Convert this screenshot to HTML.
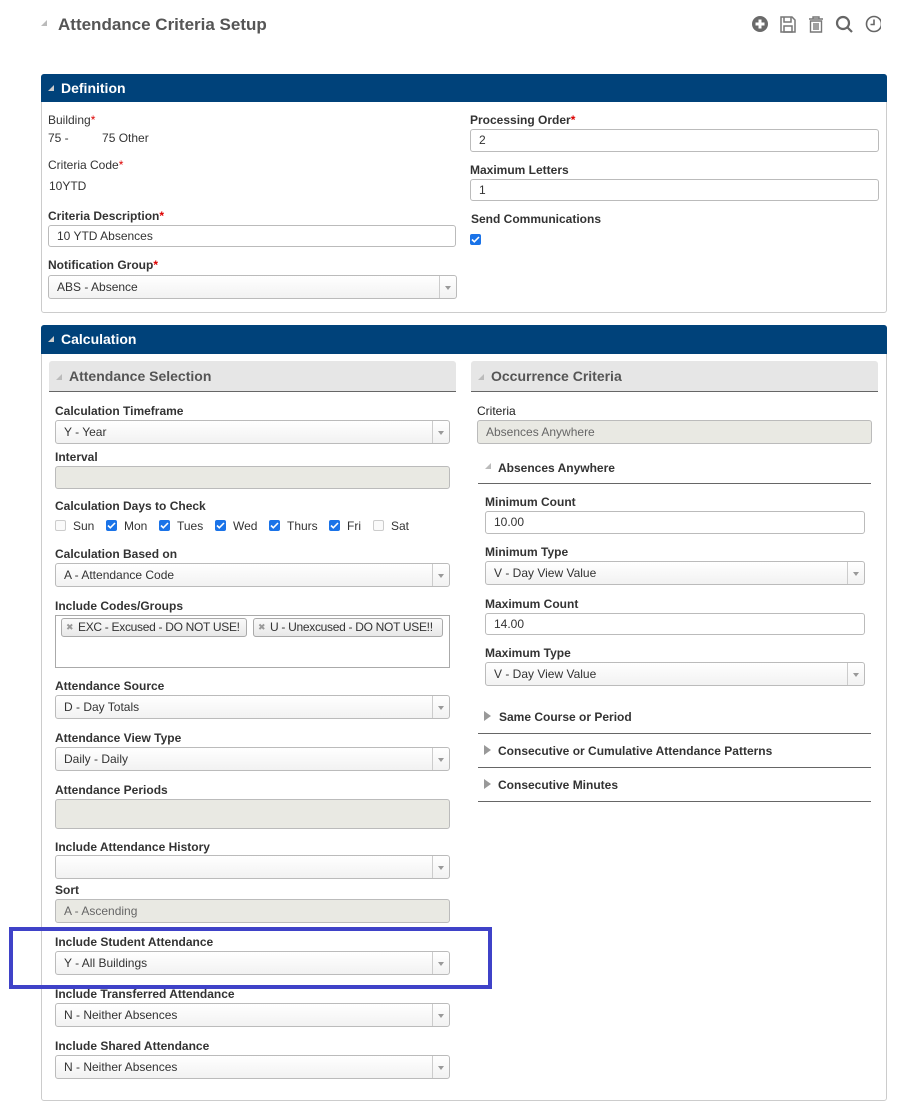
<!DOCTYPE html>
<html><head><meta charset="utf-8"><style>
*{box-sizing:border-box;margin:0;padding:0}
body{width:907px;height:1107px;background:#fff;font-family:"Liberation Sans",Arial,sans-serif;font-size:12px;color:#333;position:relative;overflow:hidden}
.a{position:absolute}
.lb{position:absolute;font-size:12px;font-weight:bold;color:#333;line-height:14px;white-space:nowrap}
.lb.n{font-weight:normal}
.req{color:#d00}
.in{position:absolute;height:23px;border:1px solid #bbb;border-radius:3px;background:#fff;padding:0 8px;line-height:21px;font-size:12px;color:#333;white-space:nowrap}
.in.dis{background:#e9e9e3;border-color:#bbb;color:#666}
.sel{position:absolute;height:24px;border:1px solid #bbb;border-radius:3px;background:linear-gradient(#fff,#f2f2f2);padding:0 8px;line-height:22px;font-size:12px;color:#333}
.sel:after{content:"";position:absolute;right:0;top:0;bottom:0;width:16px;border-left:1px solid #ccc}
.sel:before{content:"";position:absolute;right:5px;top:10px;border-left:3px solid transparent;border-right:3px solid transparent;border-top:4px solid #999}
.hdr{position:absolute;background:#00427a;color:#fff;font-weight:bold;font-size:14px;line-height:28px;padding-left:20px;border-radius:3px 3px 0 0}
.tri{position:absolute;width:0;height:0;border-left:6px solid transparent;border-bottom:6px solid #bbb}
.sub{position:absolute;background:#e6e6e6;border-bottom:1px solid #666;border-radius:3px 3px 0 0;height:31px;line-height:30px;padding-left:20px;font-weight:bold;font-size:14px;color:#555}
.cb{position:absolute;width:11px;height:11px;border-radius:2px;background:#1a73e8}
.cb svg{position:absolute;left:1px;top:1px}
.cbo{position:absolute;width:11px;height:11px;border-radius:2px;border:1px solid #ccc;background:#fafafa}
.day{position:absolute;font-size:12px;top:520px;line-height:13px}
.hr{position:absolute;height:1px;background:#666}
.rt{position:absolute;width:0;height:0;border-top:5px solid transparent;border-bottom:5px solid transparent;border-left:7px solid #999}
.chip{position:absolute;height:19px;border:1px solid #aaa;border-radius:3px;background:linear-gradient(#fafafa,#e8e8e8);line-height:17px;padding-left:16px;font-size:12px;color:#333;white-space:nowrap;overflow:hidden;letter-spacing:-0.3px}
</style></head><body>

<div class="tri" style="left:41px;top:20px"></div>
<div class="a" style="left:58px;top:15px;font-size:17px;font-weight:bold;color:#555">Attendance Criteria Setup</div>

<svg class="a" style="left:751px;top:15px" width="130" height="20" viewBox="0 0 130 20">
 <circle cx="9" cy="9" r="8" fill="#6a6a6a"/><rect x="4.5" y="7.5" width="9" height="3" fill="#fff"/><rect x="7.5" y="4.5" width="3" height="9" fill="#fff"/>
 <g fill="none" stroke="#777" stroke-width="1.5"><path d="M30 2h11l3 3v12H30z"/><path d="M33 2v5h7V2"/><rect x="33" y="11" width="8" height="6"/></g>
 <g fill="none" stroke="#777" stroke-width="1.4"><path d="M58 4h14M62 4V2h6v2"/><path d="M59.5 6h11v11h-11z"/><path d="M63 8v7M65 8v7M67 8v7"/></g>
 <g fill="none" stroke="#666" stroke-width="2.2"><circle cx="92" cy="8" r="6"/><path d="M96.5 12.5l4.5 4.5"/></g>
 <g fill="none" stroke="#666" stroke-width="1.6"><circle cx="123" cy="9" r="7.5"/><path d="M123 4.5v5h-3.5"/></g>
</svg>

<div class="a" style="left:41px;top:74px;width:846px;height:239px;border:1px solid #ccc;border-radius:3px"></div>
<div class="hdr" style="left:41px;top:74px;width:846px;height:28px">Definition</div>
<div class="tri" style="left:48px;top:85px;border-bottom-color:#ccc"></div>

<div class="lb n" style="left:48px;top:113px">Building<span class="req">*</span></div>
<div class="a" style="left:48px;top:131px">75 -&nbsp;&nbsp;&nbsp;&nbsp;&nbsp;&nbsp;&nbsp;&nbsp;&nbsp;&nbsp;75 Other</div>
<div class="lb n" style="left:48px;top:158px">Criteria Code<span class="req">*</span></div>
<div class="a" style="left:49px;top:179px">10YTD</div>
<div class="lb" style="left:48px;top:209px">Criteria Description<span class="req">*</span></div>
<div class="in" style="left:48px;top:225px;width:408px;height:22px;line-height:20px">10 YTD Absences</div>
<div class="lb" style="left:48px;top:258px">Notification Group<span class="req">*</span></div>
<div class="sel" style="left:48px;top:275px;width:409px">ABS - Absence</div>

<div class="lb" style="left:470px;top:113px">Processing Order<span class="req">*</span></div>
<div class="in" style="left:470px;top:129px;width:409px;height:23px">2</div>
<div class="lb" style="left:470px;top:163px">Maximum Letters</div>
<div class="in" style="left:470px;top:179px;width:409px;height:22px;line-height:20px">1</div>
<div class="lb" style="left:471px;top:212px">Send Communications</div>
<div class="cb" style="left:470px;top:234px"><svg width="9" height="9" viewBox="0 0 9 9"><path d="M1 4.5l2.3 2.3L8 2" stroke="#fff" stroke-width="1.6" fill="none"/></svg></div>

<div class="a" style="left:41px;top:325px;width:846px;height:776px;border:1px solid #ccc;border-radius:3px"></div>
<div class="hdr" style="left:41px;top:325px;width:846px;height:29px">Calculation</div>
<div class="tri" style="left:48px;top:336px;border-bottom-color:#ccc"></div>

<div class="sub" style="left:49px;top:361px;width:407px">Attendance Selection</div>
<div class="tri" style="left:56px;top:374px"></div>
<div class="sub" style="left:471px;top:361px;width:407px">Occurrence Criteria</div>
<div class="tri" style="left:478px;top:374px"></div>

<div class="lb" style="left:55px;top:404px">Calculation Timeframe</div>
<div class="sel" style="left:55px;top:420px;width:395px">Y - Year</div>
<div class="lb" style="left:55px;top:450px">Interval</div>
<div class="in dis" style="left:55px;top:466px;width:395px;height:23px"></div>
<div class="lb" style="left:55px;top:499px">Calculation Days to Check</div>
<div class="cbo" style="left:55px;top:520px"></div><div class="day" style="left:73px">Sun</div>
<div class="cb" style="left:106px;top:520px"><svg width="9" height="9" viewBox="0 0 9 9"><path d="M1 4.5l2.3 2.3L8 2" stroke="#fff" stroke-width="1.6" fill="none"/></svg></div><div class="day" style="left:124px">Mon</div>
<div class="cb" style="left:159px;top:520px"><svg width="9" height="9" viewBox="0 0 9 9"><path d="M1 4.5l2.3 2.3L8 2" stroke="#fff" stroke-width="1.6" fill="none"/></svg></div><div class="day" style="left:177px">Tues</div>
<div class="cb" style="left:215px;top:520px"><svg width="9" height="9" viewBox="0 0 9 9"><path d="M1 4.5l2.3 2.3L8 2" stroke="#fff" stroke-width="1.6" fill="none"/></svg></div><div class="day" style="left:233px">Wed</div>
<div class="cb" style="left:269px;top:520px"><svg width="9" height="9" viewBox="0 0 9 9"><path d="M1 4.5l2.3 2.3L8 2" stroke="#fff" stroke-width="1.6" fill="none"/></svg></div><div class="day" style="left:287px">Thurs</div>
<div class="cb" style="left:329px;top:520px"><svg width="9" height="9" viewBox="0 0 9 9"><path d="M1 4.5l2.3 2.3L8 2" stroke="#fff" stroke-width="1.6" fill="none"/></svg></div><div class="day" style="left:347px">Fri</div>
<div class="cbo" style="left:373px;top:520px"></div><div class="day" style="left:391px">Sat</div>

<div class="lb" style="left:55px;top:547px">Calculation Based on</div>
<div class="sel" style="left:55px;top:563px;width:395px">A - Attendance Code</div>
<div class="lb" style="left:55px;top:599px">Include Codes/Groups</div>
<div class="a" style="left:55px;top:615px;width:395px;height:53px;border:1px solid #aaa;background:#fff"></div>
<div class="chip" style="left:61px;top:618px;width:186px">EXC - Excused - DO NOT USE!<span class="a" style="left:4px;top:0;color:#999;font-size:9px">✖</span></div>
<div class="chip" style="left:253px;top:618px;width:190px">U - Unexcused - DO NOT USE!!<span class="a" style="left:4px;top:0;color:#999;font-size:9px">✖</span></div>

<div class="lb" style="left:55px;top:679px">Attendance Source</div>
<div class="sel" style="left:55px;top:695px;width:395px">D - Day Totals</div>
<div class="lb" style="left:55px;top:731px">Attendance View Type</div>
<div class="sel" style="left:55px;top:747px;width:395px">Daily - Daily</div>
<div class="lb" style="left:55px;top:783px">Attendance Periods</div>
<div class="in dis" style="left:55px;top:799px;width:395px;height:30px"></div>
<div class="lb" style="left:55px;top:840px">Include Attendance History</div>
<div class="sel" style="left:55px;top:855px;width:395px"></div>
<div class="lb" style="left:55px;top:883px">Sort</div>
<div class="in dis" style="left:55px;top:899px;width:395px;height:24px;line-height:22px">A - Ascending</div>
<div class="lb" style="left:55px;top:935px">Include Student Attendance</div>
<div class="sel" style="left:55px;top:951px;width:395px">Y - All Buildings</div>
<div class="lb" style="left:55px;top:987px">Include Transferred Attendance</div>
<div class="sel" style="left:55px;top:1003px;width:395px">N - Neither Absences</div>
<div class="lb" style="left:55px;top:1039px">Include Shared Attendance</div>
<div class="sel" style="left:55px;top:1055px;width:395px">N - Neither Absences</div>

<div class="a" style="left:9px;top:927px;width:483px;height:62px;border:4px solid #3f42c8"></div>

<div class="lb n" style="left:477px;top:404px;color:#222">Criteria</div>
<div class="in dis" style="left:477px;top:420px;width:395px;height:24px;line-height:22px">Absences Anywhere</div>
<div class="tri" style="left:485px;top:463px"></div>
<div class="lb" style="left:498px;top:461px">Absences Anywhere</div>
<div class="hr" style="left:478px;top:483px;width:393px"></div>
<div class="lb" style="left:485px;top:495px">Minimum Count</div>
<div class="in" style="left:485px;top:511px;width:380px;height:23px">10.00</div>
<div class="lb" style="left:485px;top:545px">Minimum Type</div>
<div class="sel" style="left:485px;top:561px;width:380px">V - Day View Value</div>
<div class="lb" style="left:485px;top:597px">Maximum Count</div>
<div class="in" style="left:485px;top:613px;width:380px;height:22px;line-height:20px">14.00</div>
<div class="lb" style="left:485px;top:646px">Maximum Type</div>
<div class="sel" style="left:485px;top:662px;width:380px">V - Day View Value</div>

<div class="rt" style="left:484px;top:711px"></div><div class="lb" style="left:499px;top:710px">Same Course or Period</div>
<div class="hr" style="left:478px;top:733px;width:393px"></div>
<div class="rt" style="left:484px;top:745px"></div><div class="lb" style="left:498px;top:744px">Consecutive or Cumulative Attendance Patterns</div>
<div class="hr" style="left:478px;top:767px;width:393px"></div>
<div class="rt" style="left:484px;top:779px"></div><div class="lb" style="left:498px;top:778px">Consecutive Minutes</div>
<div class="hr" style="left:478px;top:801px;width:393px"></div>

</body></html>
